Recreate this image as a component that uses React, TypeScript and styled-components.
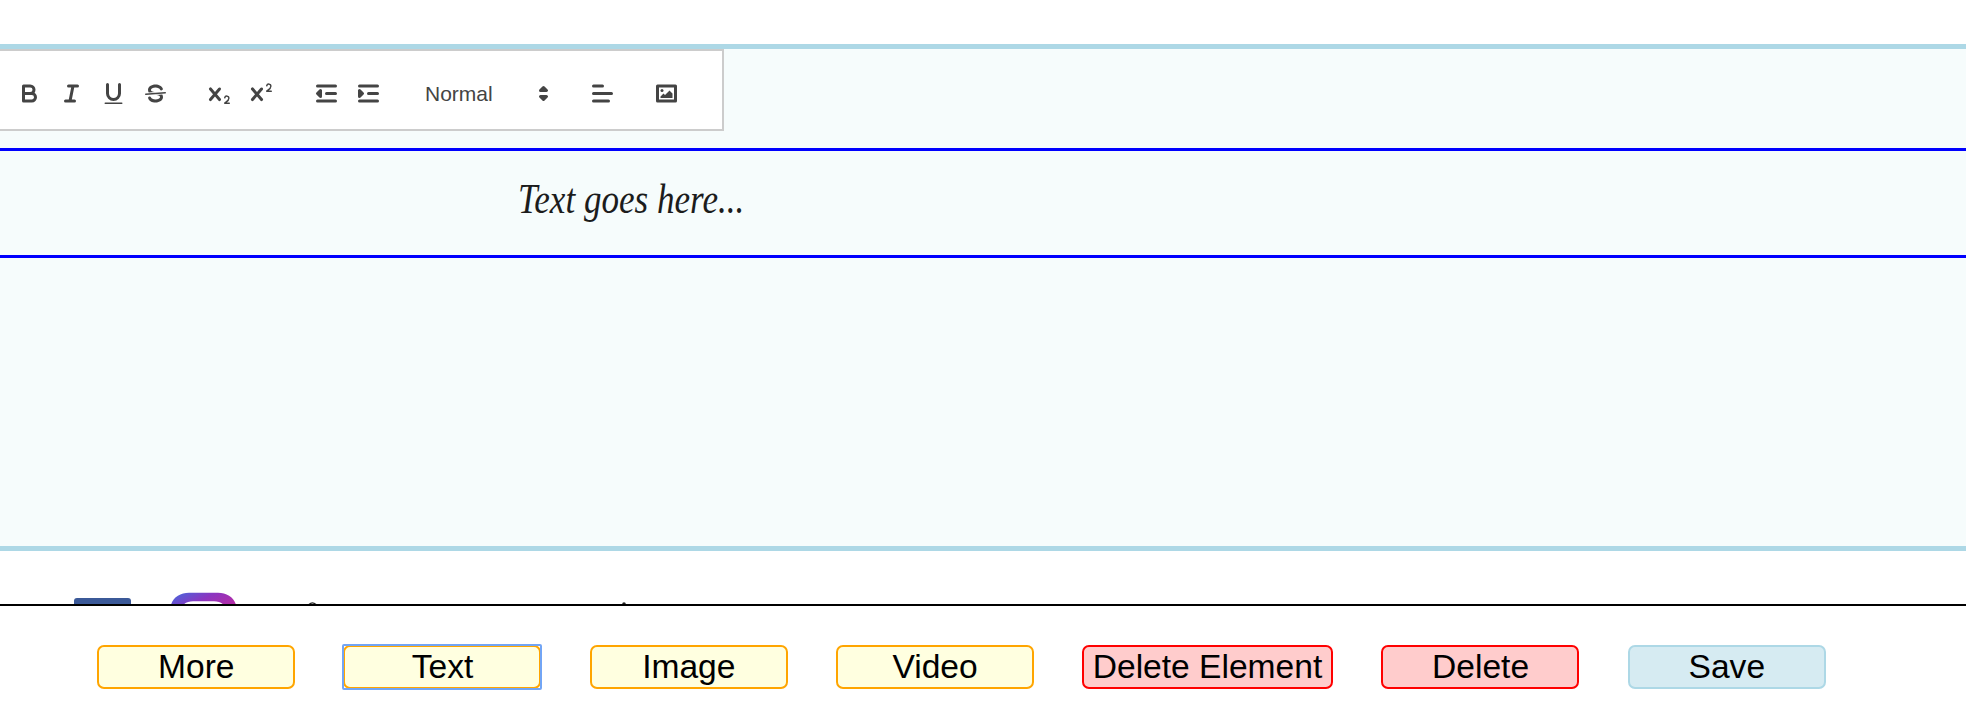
import React from "react";
import styled, { createGlobalStyle, css } from "styled-components";

const GlobalStyle = createGlobalStyle`
  * { box-sizing: border-box; }
  body { margin: 0; background: #fff; overflow: hidden; }
`;

const Page = styled.div`
  display: flex;
  flex-direction: column;
  height: 712px;
  padding-top: 44px;
  overflow: hidden;
  font-family: "Liberation Sans", Arial, sans-serif;
`;

const Editor = styled.main`
  height: 507px;
  flex: none;
  border-top: 5px solid lightblue;
  border-bottom: 5px solid lightblue;
  background: #f6fcfc;
`;

const Toolbar = styled.div`
  display: flex;
  gap: 22px;
  width: 729px;
  height: 82px;
  margin-left: -5px;
  padding: 24.5px 11px 0;
  border: 2px solid #ccc;
  background: #fff;

  > :nth-child(3),
  > :nth-child(5) {
    margin-left: 1px;
  }
`;

const ToolGroup = styled.div`
  display: flex;
  height: 36px;
`;

const ToolButton = styled.button`
  display: block;
  width: 42px;
  height: 36px;
  padding: 4.5px 7px 4.5px 8px;
  border: 0;
  background: none;
`;

const FormatPicker = styled.div`
  display: flex;
  align-items: center;
  justify-content: space-between;
  width: 147px;
  height: 36px;
  padding: 0 1px 0 14px;
  color: #444;
  font-size: 21px;
  line-height: 36px;
`;

const Glyph = styled.svg`
  display: block;
  width: 27px;
  height: 27px;
  fill: none;
  stroke: #444;
  stroke-width: 2;
  stroke-linecap: round;
  stroke-linejoin: round;

  .fill { fill: #444; stroke: none; }
  .solid { fill: #444; }
  .thin { stroke-width: 1; }
`;

const TextElement = styled.section`
  height: 110px;
  margin-top: 17px;
  padding: 21px 0 0 518px;
  border-top: 3px solid blue;
  border-bottom: 3px solid blue;
`;

const Placeholder = styled.p`
  width: max-content;
  margin: 0;
  color: #1c1c1c;
  font: italic 42px/54px "Liberation Serif", serif;
  transform: scaleX(0.835);
  transform-origin: left;
`;

const Footer = styled.footer`
  height: 53px;
  flex: none;
  overflow: hidden;
`;

const FooterArt = styled.svg`
  display: block;
`;

const ActionBar = styled.nav`
  display: flex;
  align-items: flex-start;
  gap: 48.25px;
  flex: 1;
  padding: 39px 0 0 97px;
  border-top: 2px solid #000;
  background: #fff;
`;

type Tone = "add" | "remove" | "save";

const tones: Record<Tone, { border: string; fill: string }> = {
  add: { border: "orange", fill: "#ffffe0" },
  remove: { border: "red", fill: "#ffcccc" },
  save: { border: "lightblue", fill: "#d6ebf2" },
};

const ActionButton = styled.button<{ $tone: Tone; $wide?: boolean; $focused?: boolean }>`
  flex: none;
  width: ${(p) => (p.$wide ? 251 : 198)}px;
  height: 44px;
  padding: 0 0 0 ${(p) => (p.$wide ? 0 : 0.6)}px;
  border: 2px solid ${(p) => tones[p.$tone].border};
  border-radius: 7px;
  background: ${(p) => tones[p.$tone].fill};
  color: #000;
  font: 33.6px/40px "Liberation Sans", Arial, sans-serif;
  white-space: nowrap;
  ${(p) =>
    p.$focused &&
    css`
      position: relative;
      outline: none;
      &::after {
        content: "";
        position: absolute;
        inset: -3px;
        border: 2px solid #72a5f5;
        border-radius: 2px;
      }
    `}
`;

const LetterX =
  "M9.65,5.241a1,1,0,0,0-1.409.108L6,7.964,3.759,5.349A1,1,0,0,0,2.192,6.59178Q2.21541,6.6213,2.241,6.649L4.684,9.5,2.241,12.35A1,1,0,0,0,3.71,13.70722q0.02557-.02768.049-0.05722L6,11.036,8.241,13.65a1,1,0,1,0,1.567-1.24277Q9.78459,12.3777,9.759,12.35L7.316,9.5,9.759,6.651A1,1,0,0,0,9.65,5.241Z";

const icons = {
  bold: (
    <>
      <path d="M5,4H9.5A2.5,2.5,0,0,1,12,6.5v0A2.5,2.5,0,0,1,9.5,9H5V4Z" />
      <path d="M5,9h5.5A2.5,2.5,0,0,1,13,11.5v0A2.5,2.5,0,0,1,10.5,14H5V9Z" />
    </>
  ),
  italic: <path d="M7,4H13M5,14H11M8,14L10,4" />,
  underline: (
    <>
      <path d="M5,3V9a4.012,4.012,0,0,0,4,4H9a4.012,4.012,0,0,0,4-4V3" />
      <rect className="fill" x="3" y="15" width="12" height="1" rx="0.5" />
    </>
  ),
  strike: (
    <>
      <path className="thin" d="M15.5,8.5L2.5,9.5" />
      <path className="fill" d="M9.007,8C6.542,7.791,6,7.519,6,6.5,6,5.792,7.283,5,9,5c1.571,0,2.765.679,2.969,1.309a1,1,0,0,0,1.9-.617C13.356,4.106,11.354,3,9,3,6.2,3,4,4.538,4,6.5a3.2,3.2,0,0,0,.5,1.843Z" />
      <path className="fill" d="M8.984,10C11.457,10.208,12,10.479,12,11.5c0,0.708-1.283,1.5-3,1.5-1.571,0-2.765-.679-2.969-1.309a1,1,0,1,0-1.9.617C4.644,13.894,6.646,15,9,15c2.8,0,5-1.538,5-3.5a3.2,3.2,0,0,0-.5-1.843Z" />
    </>
  ),
  sub: (
    <>
      <path className="fill" d="M15.5,15H13.861a3.858,3.858,0,0,0,1.914-2.975,1.8,1.8,0,0,0-1.6-1.751A1.921,1.921,0,0,0,12.021,11.7a0.50013,0.50013,0,1,0,.957.291h0a0.914,0.914,0,0,1,1.053-.725,0.81,0.81,0,0,1,.744.762c0,1.076-1.16971,1.86982-1.93971,2.43082A1.45639,1.45639,0,0,0,12,15.5a0.5,0.5,0,0,0,.5.5h3A0.5,0.5,0,0,0,15.5,15Z" />
      <path className="fill" d={LetterX} />
    </>
  ),
  sup: (
    <>
      <path className="fill" d="M15.5,7H13.861a4.015,4.015,0,0,0,1.914-2.975,1.8,1.8,0,0,0-1.6-1.751A1.922,1.922,0,0,0,12.021,3.7a0.5,0.5,0,1,0,.957.291,0.917,0.917,0,0,1,1.053-.725,0.81,0.81,0,0,1,.744.762c0,1.077-1.164,1.925-1.934,2.486A1.423,1.423,0,0,0,12,7.5a0.5,0.5,0,0,0,.5.5h3A0.5,0.5,0,0,0,15.5,7Z" />
      <path className="fill" d={LetterX} />
    </>
  ),
  outdent: (
    <>
      <path d="M3,14H15M3,4H15M9,9H15" />
      <polyline className="solid" points="5 7 5 11 3 9 5 7" />
    </>
  ),
  indent: (
    <>
      <path d="M3,14H15M3,4H15M9,9H15" />
      <polyline className="solid" points="3 7 3 11 5 9 3 7" />
    </>
  ),
  picker: (
    <>
      <polygon className="solid" points="7 11 9 13 11 11 7 11" />
      <polygon className="solid" points="7 7 9 5 11 7 7 7" />
    </>
  ),
  align: <path d="M3,9H15M3,14H13M3,4H9" />,
  image: (
    <>
      <rect x="3" y="4" width="12" height="10" />
      <circle className="fill" cx="6" cy="7" r="1" />
      <polyline className="fill" points="5 12 5 11 7 9 8 10 11 7 13 9 13 12 5 12" />
    </>
  ),
};

type IconName = keyof typeof icons;

const Icon = ({ name }: { name: IconName }) => <Glyph viewBox="0 0 18 18">{icons[name]}</Glyph>;

const Tools = ({ names }: { names: IconName[] }) => (
  <ToolGroup>
    {names.map((name) => (
      <ToolButton key={name} aria-label={name}>
        <Icon name={name} />
      </ToolButton>
    ))}
  </ToolGroup>
);

const actions: { label: string; tone: Tone; wide?: boolean; focused?: boolean }[] = [
  { label: "More", tone: "add" },
  { label: "Text", tone: "add", focused: true },
  { label: "Image", tone: "add" },
  { label: "Video", tone: "add" },
  { label: "Delete Element", tone: "remove", wide: true },
  { label: "Delete", tone: "remove" },
  { label: "Save", tone: "save" },
];

export default function App() {
  return (
    <Page>
      <GlobalStyle />
      <Editor>
        <Toolbar>
          <Tools names={["bold", "italic", "underline", "strike"]} />
          <Tools names={["sub", "sup"]} />
          <Tools names={["outdent", "indent"]} />
          <FormatPicker>
            <span>Normal</span>
            <Icon name="picker" />
          </FormatPicker>
          <Tools names={["align"]} />
          <Tools names={["image"]} />
        </Toolbar>
        <TextElement>
          <Placeholder>Text goes here...</Placeholder>
        </TextElement>
      </Editor>
      <Footer>
        <FooterArt width="700" height="53" viewBox="0 0 700 53">
          <defs>
            <linearGradient id="camera" gradientUnits="userSpaceOnUse" x1="184" y1="34" x2="204" y2="72">
              <stop offset="0" stopColor="#3f6ee0" />
              <stop offset="0.5" stopColor="#8b35c0" />
              <stop offset="1" stopColor="#bb2ba2" />
            </linearGradient>
          </defs>
          <rect x="74" y="47" width="57" height="57" rx="3" fill="#3b5998" />
          <path
            fill="url(#camera)"
            fillRule="evenodd"
            d="M170.500 58C170.500 48 179 41.800 189 41.800H218C228 41.800 236.500 48 236.500 58V104H170.500ZM182 58C182 53 187 50.300 193 50.300H214C220 50.300 225 53 225 58V96H182Z"
          />
          <path d="M308.500 54Q312.300 49.800 316.500 54" fill="none" stroke="#222" strokeWidth="1.300" />
          <circle cx="624" cy="53" r="1.800" fill="#222" />
        </FooterArt>
      </Footer>
      <ActionBar>
        {actions.map((a) => (
          <ActionButton key={a.label} $tone={a.tone} $wide={a.wide} $focused={a.focused}>
            {a.label}
          </ActionButton>
        ))}
      </ActionBar>
    </Page>
  );
}
